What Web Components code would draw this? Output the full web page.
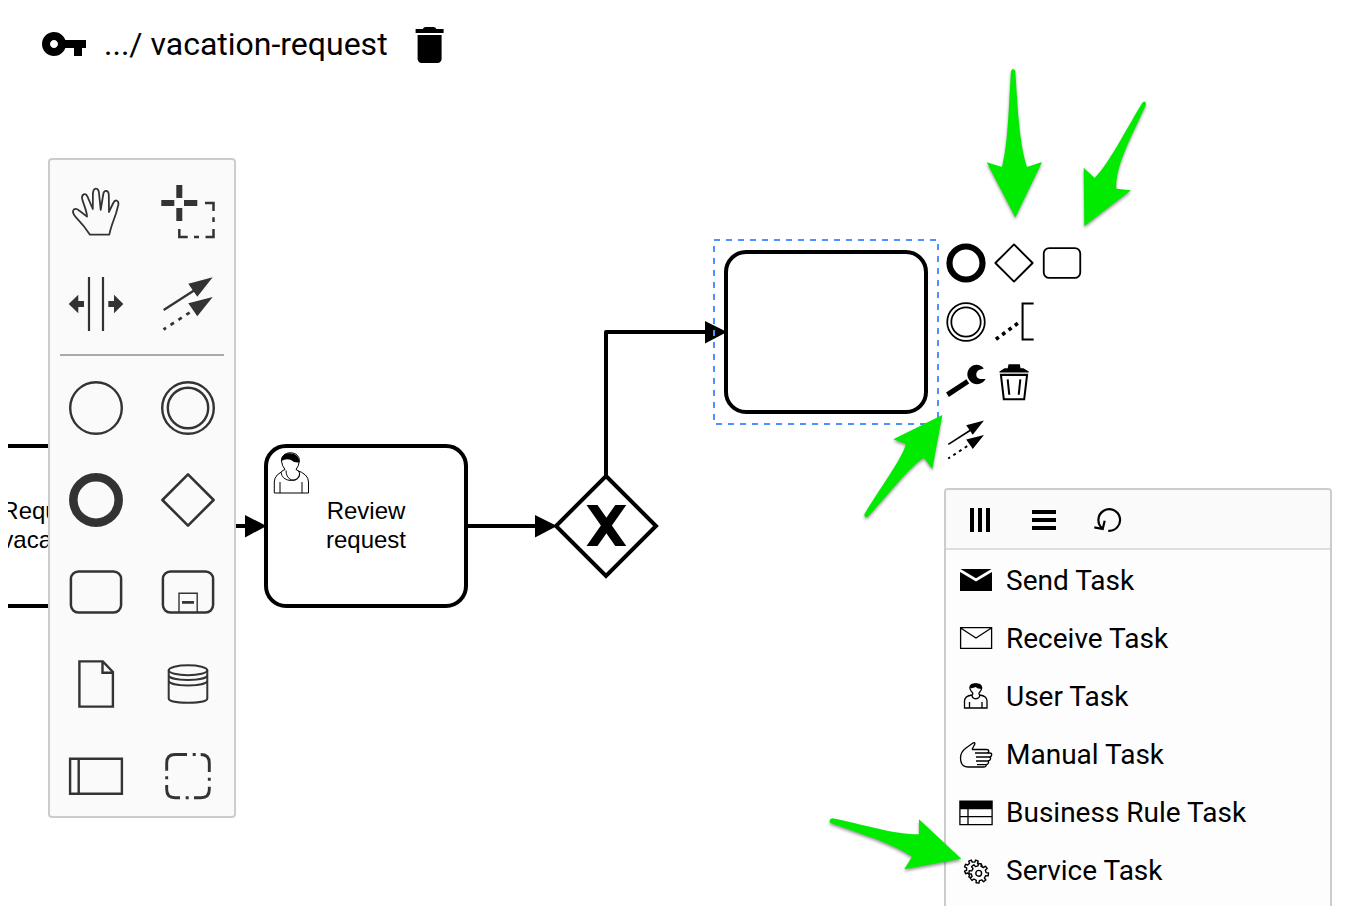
<!DOCTYPE html>
<html lang="en">
<head>
<meta charset="utf-8">
<title>vacation-request</title>
<style>
html,body{margin:0;height:100%;overflow:hidden;background:#fff;color:#000;font-family:Roboto,"Liberation Sans",sans-serif}
</style>
</head>
<body>
<bpmn-modeler></bpmn-modeler>
<script>
const define = (name, html, setup) => {
  const template = document.createElement('template');
  template.innerHTML = html;
  customElements.define(name, class extends HTMLElement {
    connectedCallback() {
      if (this.shadowRoot) return;
      this.attachShadow({ mode: 'open' }).append(template.content.cloneNode(true));
      if (setup) setup(this, this.shadowRoot);
    }
  });
};

// outline of a cog wheel with square teeth
function gear(cx, cy, inner, outer, teeth, turn = 0) {
  let d = '';
  const step = Math.PI * 2 / teeth;
  for (let i = 0; i < teeth; i++) {
    [[-.27, inner], [-.19, outer], [.19, outer], [.27, inner]].forEach(([k, r]) => {
      const a = (i + k) * step + turn;
      d += (d ? 'L' : 'M') + (cx + r * Math.cos(a)).toFixed(2) + ' ' + (cy + r * Math.sin(a)).toFixed(2);
    });
  }
  return d + 'Z';
}

// every icon is drawn around its own centre
const line = 'fill="none" stroke="currentColor"';
const ICONS = {
  hand: `<path ${line} stroke-width="1.8" stroke-linejoin="round" d="M-6 22.7C-10 16.5-13.500 12-20 5.300C-22 3.200-23.500.5-22.800-1.500C-21.800-4-18.800-3.600-16.500-1.200L-9 4.600C-9-1-12.500-7.500-13.800-13C-14.800-18-10.300-19.700-8.400-15.200L-3.200-3L-3.100-17.500C-3-25.300 2.700-25.300 3.100-18L4.700-2.200L7.300-18C8.300-22.500 12.900-22 12.800-16.500L13 0C14.500-3.500 15.800-6 17.300-9C19.300-13.200 23.200-11.500 22.300-7L20 1.500C17.500 9 15 14 13.300 22.700Z"/>`,
  lasso: `<path fill="currentColor" d="M-26.700-12h13v6h-13zM-4-12H9.300v6H-4zM-11.700-27h6v13h-6zM-11.700-4h6V9h-6z"/><path ${line} stroke-width="2.500" d="M17-9h8.500v8M25.500 5.300V10M25.500 17v8h-8M11 25H6M-.3 25h-8.400v-8"/>`,
  space: `<path ${line} stroke-width="2.200" d="M-7-27V27M7-27V27"/><path fill="currentColor" d="M-27.300 0l9.600-9.300V-3h5.700v6h-5.700v6.300zM27.300 0L18-9.300V-3h-5.700v6H18v6.300z"/>`,
  connect: `<path ${line} stroke-width="2.300" d="M-24.300 6L6-13.500"/><path ${line} stroke-width="2.700" stroke-dasharray="4 5.400" stroke-dashoffset="1" d="M-24.500 25.500L4 7"/><path fill="currentColor" d="M24.700-26.700L9.300-7.300.3-20.300zM24.700-7L9.300 12.300.3-.7z"/>`,
  start: `<circle ${line} stroke-width="2.400" r="25.800"/>`,
  intermediate: `<circle ${line} stroke-width="2.400" r="25.800"/><circle ${line} stroke-width="2.400" r="20.200"/>`,
  end: `<circle ${line} stroke-width="8.500" r="22.700"/>`,
  gateway: `<path ${line} stroke-width="2.600" stroke-linejoin="round" d="M0-25.600L25.600 0 0 25.600-25.600 0z"/>`,
  task: `<rect ${line} stroke-width="2.500" x="-25.100" y="-20.500" width="50.200" height="41" rx="7.500"/>`,
  subprocess: `<rect ${line} stroke-width="2.500" x="-25.100" y="-20.500" width="50.200" height="41" rx="7.500"/><path ${line} stroke-width="1.400" d="M-9 20V1.300H9.200V20"/><path ${line} stroke-width="2.700" d="M-6 10.400H6"/>`,
  data: `<path ${line} stroke-width="2.400" d="M-16.600-22.600H6.800L16.900-12V22.600H-16.600zM6.500-22V-11.300H17"/>`,
  store: `<g ${line} stroke-width="2"><ellipse cy="-13.800" rx="19.300" ry="5"/><path d="M-19.300-14V14.400C-19.300 20.200 19.300 20.200 19.300 14.400V-14M-19.300-9C-19.300-2.400 19.300-2.400 19.300-9M-19.300-3.500C-19.300 3 19.300 3 19.300-3.500"/></g>`,
  pool: `<path ${line} stroke-width="2.400" d="M-25.900-17.200h51.800v35H-25.900zM-17.300-17V18"/>`,
  group: `<path ${line} stroke-width="2.900" d="M-1-21.500H-13Q-21.300-21.500-21.300-13V-5.300M4.700-21.500h3M12.700-21.500Q21.300-21.500 21.300-13V-4M21.300 1.700v3M21.300 10.700V13.500Q21.300 21.700 13 21.700H6M.7 21.700h-3M-8 21.700H-13Q-21.300 21.700-21.300 13.500V9M-21.300 3.300v-3"/>`,
  annotation: `<path ${line} stroke-width="2.800" d="M27-25.300H11.800V24H27"/><path ${line} stroke-width="5" stroke-dasharray="5 5.800" d="M-24.900 23.800L10-1.700"/>`,
  wrench: `<g transform="translate(0 1.400)"><path ${line} stroke-width="7" d="M-25.500 17.500L2.500-.8"/><path fill="currentColor" d="M24.500-18.500C20-24.500 12-25.300 6.500-20.500C.5-15.500.5-6.500 5.500-1.500C12 5.500 22.500 4 27-4L19.500-4C13.500-5 12-12.500 17.500-16.500Z"/></g>`,
  trash: `<g transform="translate(0 1.400)"><path fill="currentColor" d="M-20-14.500L-13-19H-8.700L-7.500-24.500H8L9-19H13L20.300-14.500V-13H-20z"/><path ${line} stroke-width="2.800" d="M-18-9.800H18L14 23.700H-14zM-8.700-3.500L-6.500 17.500M8.700-3.500L6.500 17.500"/></g>`,
  columns: `<path fill="currentColor" d="M-10-12h4v24h-4zM-2-12h4v24h-4zM6-12h4v24H6z"/>`,
  rows: `<path fill="currentColor" d="M-12-10h24v4h-24zM-12-2h24v4h-24zM-12 6h24v4h-24z"/>`,
  loop: `<path ${line} stroke-width="2.200" d="M.2 10.750A10.800 10.800 0 1 0-5.800 8.200M-13.700 7.300L-5.300 9-3.300.7"/>`,
  send: `<path fill="currentColor" d="M-15.500-11H15.500L0-1.700zM-16-8L0 1.500 16-8V11H-16z"/>`,
  receive: `<path ${line} stroke-width="1.300" d="M-15.400-10.300h31v20.600h-31zM-15.400-10L0 0 15.400-10"/>`,
  user: `<g ${line} stroke-width="1.300"><path d="M-4-1C-9-.3-11.500 1.500-11.500 5V12H11V5C11 1.500 9-.3 3.800-1M-6.500 12V6M6 12V6M-4-1C-4 4 4 4 3.800-1C2.500-2 2.700-2.800 4-4.200C7.500-9 5-12-.3-12S-8-9-4.300-4.200C-2.900-2.800-2.700-2-4-1"/></g><path fill="currentColor" d="M-5.800-8C-6-14 6-14 5.500-7Q1.500-7-.5-9Q-3-7.500-5.800-8"/>`,
  manual: `<path ${line} stroke-width="1.300" stroke-linejoin="round" d="M-4-4.500H10.500C13.500-4.500 13.500-1 10.500-1H-1M10.500-1H13.500C16.500-1 16.500 2.500 13.500 3H0M13 3C15.500 3.300 15 6.500 12 7H0M11.500 7C13.500 7.500 12.500 10.500 10 10.700H1M9.500 10.700C11 11 10 13 8 13H-8C-13 13-15.500 10-15.500 4C-15.500-1-13.500-3.500-10-6L-3-11C-1-12-.5-10-2-8.500L-4-4.500"/>`,
  rule: `<path ${line} stroke-width="1.300" d="M-16.100-10.900h32.200v23.500h-32.200zM-16-3.500H16M-16 4.700H16M-8-4V12.500"/><path fill="currentColor" d="M-16-11H16v7.300H-16z"/>`,
  service: `<g ${line} stroke-width="1.400" stroke-linejoin="round"><path d="${gear(-2.500, -1, 7, 9.200, 8, .39)}"/><path fill="#fdfdfd" d="${gear(2.700, 3.300, 7.400, 9.800, 8, .12)}"/><circle cx="2.700" cy="3.300" r="2.900"/></g>`,
  key: `<path fill="currentColor" transform="translate(-24-24) scale(2)" d="M12.650 10C11.830 7.670 9.610 6 7 6c-3.310 0-6 2.690-6 6s2.690 6 6 6c2.610 0 4.830-1.670 5.650-4H17v4h4v-4h2v-4zM7 14c-1.100 0-2-.9-2-2s.9-2 2-2 2 .9 2 2-.9 2-2 2z"/>`,
  delete: `<path fill="currentColor" transform="translate(-24.400-24) scale(2)" d="M6 19c0 1.100.9 2 2 2h8c1.100 0 2-.9 2-2V7H6zM19 4h-3.600Q15 3 14 3h-4Q9 3 8.600 4H5v2h14z"/>`
};

define('bpmn-icon', `
<style>
:host{display:block;width:var(--icon-size,56px);height:var(--icon-size,56px);flex:none}
svg{display:block;width:100%;height:100%;overflow:visible}
</style>
<svg></svg>`, (host, root) => {
  const svg = root.querySelector('svg');
  const box = +(host.getAttribute('box') || 56);
  svg.setAttribute('viewBox', `${-box / 2} ${-box / 2} ${box} ${box}`);
  svg.innerHTML = ICONS[host.getAttribute('name')];
});

define('page-header', `
<style>
:host{display:flex;align-items:center;height:88px;padding-left:40px;box-sizing:border-box;--icon-size:48px}
h1{margin:0 18px 0 16px;font-size:32px;line-height:40px;font-weight:400;white-space:nowrap}
bpmn-icon[name=delete]{margin-top:2px}
</style>
<bpmn-icon name="key" box="48"></bpmn-icon><h1><slot></slot></h1><bpmn-icon name="delete" box="48"></bpmn-icon>`);

define('tool-palette', `
<style>
:host{display:grid;grid-template-columns:92px 92px;grid-auto-rows:92px;grid-template-rows:92px 92px 12px;width:184px;background:#fafafa;border:2px solid #ccc;border-radius:4px;color:#333}
bpmn-icon{margin:24px 0 0 18px}
hr{grid-column:1/-1;margin:10px 10px 0;border:0;height:2px;background:#aaa}
</style>
<bpmn-icon name="hand"></bpmn-icon><bpmn-icon name="lasso"></bpmn-icon>
<bpmn-icon name="space"></bpmn-icon><bpmn-icon name="connect"></bpmn-icon>
<hr>
<bpmn-icon name="start"></bpmn-icon><bpmn-icon name="intermediate"></bpmn-icon>
<bpmn-icon name="end"></bpmn-icon><bpmn-icon name="gateway"></bpmn-icon>
<bpmn-icon name="task"></bpmn-icon><bpmn-icon name="subprocess"></bpmn-icon>
<bpmn-icon name="data"></bpmn-icon><bpmn-icon name="store"></bpmn-icon>
<bpmn-icon name="pool"></bpmn-icon><bpmn-icon name="group"></bpmn-icon>`);

define('context-pad', `
<style>
:host{display:flex;flex-direction:column;gap:19px;--icon-size:40px}
div{display:flex;gap:8px}
</style>
<div><bpmn-icon box="55" name="end"></bpmn-icon><bpmn-icon box="55" name="gateway"></bpmn-icon><bpmn-icon box="55" name="task"></bpmn-icon></div>
<div><bpmn-icon box="55" name="intermediate"></bpmn-icon><bpmn-icon box="55" name="annotation"></bpmn-icon></div>
<div><bpmn-icon box="55" name="wrench"></bpmn-icon><bpmn-icon box="55" name="trash"></bpmn-icon></div>
<div><bpmn-icon box="55" name="connect"></bpmn-icon></div>`);

define('menu-entry', `
<style>
:host{display:flex;align-items:center;gap:12px;height:58px;padding-left:12px;font-size:28px;white-space:nowrap;--icon-size:36px}
</style>
<span><slot></slot></span>`, (host, root) => {
  const icon = document.createElement('bpmn-icon');
  icon.setAttribute('name', host.getAttribute('icon'));
  icon.setAttribute('box', '36');
  root.querySelector('span').before(icon);
});

define('replace-menu', `
<style>
:host{display:block;box-sizing:border-box;width:388px;height:440px;background:#fdfdfd;border:2px solid #ccc;border-radius:4px}
header{display:flex;align-items:center;gap:28px;height:60px;box-sizing:border-box;margin-bottom:1px;padding:2px 0 0 16px;background:#fafafa;border-bottom:2px solid #ddd;--icon-size:36px;border-radius:2px 2px 0 0}
</style>
<header><bpmn-icon name="columns" box="36"></bpmn-icon><bpmn-icon name="rows" box="36"></bpmn-icon><bpmn-icon name="loop" box="36"></bpmn-icon></header>
<slot></slot>`);

define('process-diagram', `
<style>
:host{display:block}
svg{display:block;width:100%;height:100%}
.shape{fill:#fff;stroke:#000;stroke-width:4}
.flow{fill:none;stroke:#000;stroke-width:4;stroke-linejoin:round}
text{font:24px "Liberation Sans",Arial,sans-serif;text-anchor:middle}
</style>
<svg viewBox="8 88 1350 818">
<defs><clipPath id="mark"><rect x="580" y="505" width="52" height="41"/></clipPath></defs>
<rect class="shape" x="-54" y="446" width="200" height="160" rx="20"/>
<text x="46" y="519">Request</text><text x="46" y="548">vacation</text>
<path class="flow" d="M146 526H250"/>
<rect class="shape" x="266" y="446" width="200" height="160" rx="20"/>
<path d="M245 515L266.500 526 245 537.500z"/>
<text x="366" y="519">Review</text><text x="366" y="548">request</text>
<g fill="none" stroke="#000" stroke-width="1">
<path d="M286 470Q274.300 474 274.300 482V493H308.500V482Q308.500 474 296 470M280 493V482M302 493V482"/>
<path fill="#fff" d="M286 470.500C286 483 300.500 483 299.500 473Q299 470.500 296 469.500Q299 466 299.300 461C300 450 281 450 281.500 461Q282 466 285 469.500Q281.500 470.500 281.200 472.500C282 483 300 483 299.500 473"/>
</g>
<path d="M281.300 461C280.500 450.500 300 450.500 299.400 462.500Q294 463 291 460Q286 458 281.300 461"/>
<path class="flow" d="M466 526H540M606 476V332H710"/>
<path class="shape" d="M606 476L656 526 606 576 556 526z"/>
<path d="M535 515L557 526 535 537.500zM705 321L727 332 705 343.500z"/>
<path clip-path="url(#mark)" stroke="#000" stroke-width="9" d="M589.200 501L623.600 550M623.600 501L589.200 550"/>
<rect class="shape" x="726" y="252" width="200" height="160" rx="20"/>
<rect x="714" y="240" width="224" height="184" fill="none" stroke="#4d90ff" stroke-width="2" stroke-dasharray="6 6"/>
</svg>`);

define('pointer-arrows', `
<style>
:host{display:block;pointer-events:none}
svg{display:block;width:100%;height:100%;filter:drop-shadow(0 2px 1.500px rgba(0,0,0,.4))}
</style>
<svg viewBox="0 0 1358 906" fill="#00eb00">
<path d="M1015.300 217.500L986.700 162.300 1002 167C1008 144 1008.500 110 1011 71Q1013.200 67 1015.300 71C1018 115 1019.500 143 1027 167L1042 162z"/>
<path d="M1084.300 226L1083.700 167.700 1094.700 178C1110 162 1124 133 1142.500 102.500Q1146 100 1146 104.500C1133 134 1115 165 1116.300 188.700L1131 190.300z"/>
<path d="M942.300 415L893.300 439.300 906 444C902 459 880 488 864.500 514Q864 518.500 868 516.500C888 495 910 466 924 457.700L932.300 469z"/>
<path d="M961.300 858.700L919 819.300V834.300C895 835 862 824 832 818.300Q828 820 830.500 823C861 834 892 843 912 856.700L904.300 869.300z"/>
</svg>`);

define('bpmn-modeler', `
<style>
:host{display:block;position:relative;width:1358px;height:906px;overflow:hidden}
process-diagram{margin-left:8px;width:1350px;height:818px}
tool-palette,context-pad,replace-menu,pointer-arrows{position:absolute}
tool-palette{left:48px;top:158px}
context-pad{left:946px;top:243px}
replace-menu{left:944px;top:488px}
pointer-arrows{inset:0}
</style>
<page-header>.../ vacation-request</page-header>
<process-diagram></process-diagram>
<tool-palette></tool-palette>
<context-pad></context-pad>
<replace-menu>
<menu-entry icon="send">Send Task</menu-entry>
<menu-entry icon="receive">Receive Task</menu-entry>
<menu-entry icon="user">User Task</menu-entry>
<menu-entry icon="manual">Manual Task</menu-entry>
<menu-entry icon="rule">Business Rule Task</menu-entry>
<menu-entry icon="service">Service Task</menu-entry>
</replace-menu>
<pointer-arrows></pointer-arrows>`);
</script>
</body>
</html>
